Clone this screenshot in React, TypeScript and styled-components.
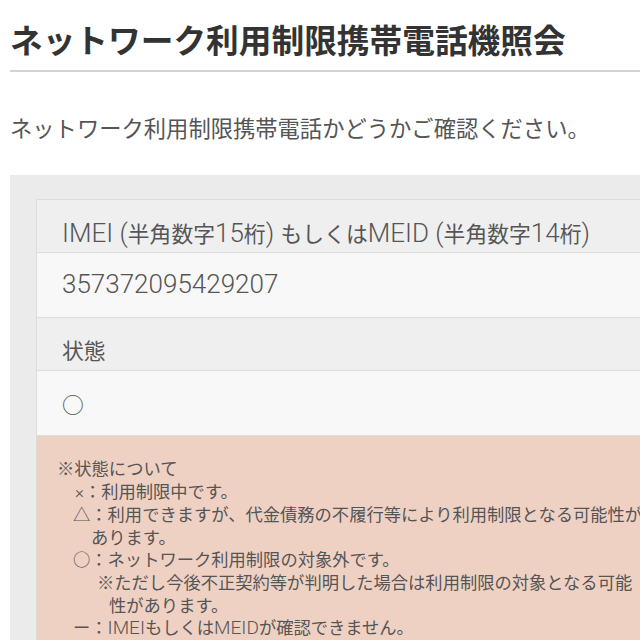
import * as React from "react";
import styled, { createGlobalStyle } from "styled-components";

const GlobalStyle = createGlobalStyle`
    html, body {
        margin: 0;
        padding: 0;
        background: #ffffff;
        overflow: hidden;
    }
    body {
        font-family: "Noto Sans CJK JP", "Noto Sans", sans-serif;
        color: #555555;
    }
`;

const Page = styled.div`
    width: 700px;
    padding-left: 10px;
`;

const Header = styled.header`
    padding: 17px 0 9px;
    border-bottom: 2px solid #d2d2d2;
`;

const Title = styled.h1`
    margin: 0;
    font-size: 32.7px;
    line-height: 44px;
    font-weight: 700;
    color: #333333;
    white-space: nowrap;
`;

const Lead = styled.p`
    margin: 40px 0 33px;
    font-size: 22.3px;
    line-height: 30px;
    color: #555555;
    white-space: nowrap;
`;

const Panel = styled.section`
    background: #ebebeb;
    padding: 24px 0 0 26px;
`;

const Table = styled.div`
    border-top: 1px solid #dcdcdc;
    border-left: 1px solid #dcdcdc;
    display: flex;
    flex-direction: column;
`;

const Cell = styled.div<{ $head?: boolean; $h: number; $pt: number }>`
    box-sizing: border-box;
    height: ${({ $h }) => $h}px;
    padding: ${({ $pt }) => $pt}px 0 0 25px;
    background: ${({ $head }) => ($head ? "#efefef" : "#f8f8f8")};
    border-bottom: 1px solid #dcdcdc;
    font-size: 21.8px;
    line-height: 30px;
    color: #555555;
    white-space: nowrap;
`;

const Latin = styled.span<{ $size?: number }>`
    font-family: "Roboto", "Liberation Sans", sans-serif;
    font-weight: 300;
    font-size: ${({ $size }) => $size ?? 26}px;
`;

const Notes = styled.div`
    background: #efd1c4;
    padding: 21px 0 20px 20px;
    font-size: 17.3px;
    line-height: 22.6px;
    color: #555555;
`;

const NoteLine = styled.div<{ $indent?: number }>`
    padding-left: ${({ $indent }) => $indent ?? 0}px;
    white-space: nowrap;
`;

export default function App() {
    return (
        <Page>
            <GlobalStyle />
            <Header>
                <Title>ネットワーク利用制限携帯電話機照会</Title>
            </Header>
            <Lead>ネットワーク利用制限携帯電話かどうかご確認ください。</Lead>
            <Panel>
                <Table>
                    <Cell $head $h={53} $pt={18}>
                        <Latin>IMEI (</Latin>半角数字<Latin>15</Latin>桁<Latin>) </Latin>もしくは
                        <Latin>MEID (</Latin>半角数字<Latin>14</Latin>桁<Latin>)</Latin>
                    </Cell>
                    <Cell $h={65} $pt={16}>
                        <Latin>357372095429207</Latin>
                    </Cell>
                    <Cell $head $h={53} $pt={17}>状態</Cell>
                    <Cell $h={65} $pt={18}>○</Cell>
                    <Notes>
                        <NoteLine>※状態について</NoteLine>
                        <NoteLine $indent={18}>
                            <Latin $size={17}>×</Latin>：利用制限中です。
                        </NoteLine>
                        <NoteLine $indent={16}>△：利用できますが、代金債務の不履行等により利用制限となる可能性が</NoteLine>
                        <NoteLine $indent={34}>あります。</NoteLine>
                        <NoteLine $indent={16}>○：ネットワーク利用制限の対象外です。</NoteLine>
                        <NoteLine $indent={40}>※ただし今後不正契約等が判明した場合は利用制限の対象となる可能</NoteLine>
                        <NoteLine $indent={52}>性があります。</NoteLine>
                        <NoteLine $indent={16}>
                            ー：<Latin $size={19}>IMEI</Latin>もしくは<Latin $size={19}>MEID</Latin>が確認できません。
                        </NoteLine>
                    </Notes>
                </Table>
            </Panel>
        </Page>
    );
}
